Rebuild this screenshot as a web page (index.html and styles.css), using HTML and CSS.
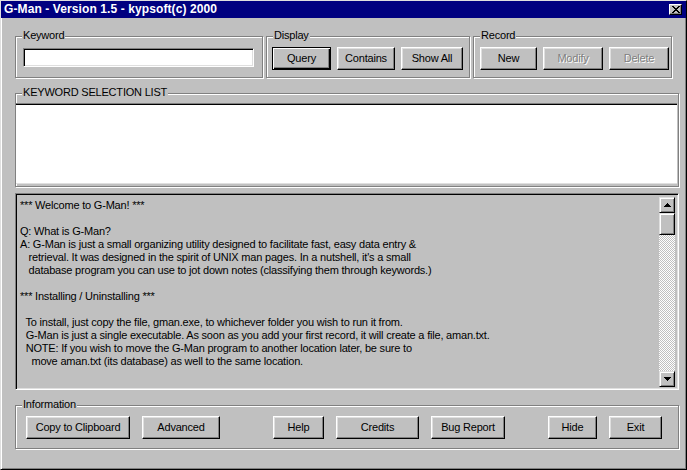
FILE: index.html
```html
<!DOCTYPE html>
<html>
<head>
<meta charset="utf-8">
<title>G-Man</title>
<link rel="stylesheet" href="styles.css">
</head>
<body>
<div class="window">
  <div class="titlebar">
    <span class="title">G-Man - Version 1.5 - kypsoft(c) 2000</span>
    <button class="close" aria-label="Close">
      <svg width="8" height="7" viewBox="0 0 8 7" shape-rendering="crispEdges">
        <path fill="#000" d="M0 0h2v1H0zM6 0h2v1H6zM1 1h2v1H1zM5 1h2v1H5zM2 2h4v1H2zM3 3h2v1H3zM2 4h4v1H2zM1 5h2v1H1zM5 5h2v1H5zM0 6h2v1H0zM6 6h2v1H6z"/>
      </svg>
    </button>
  </div>
  <div class="content">
    <div class="top-row">
      <div class="group g-keyword">
        <span class="legend">Keyword</span>
        <div class="field"></div>
      </div>
      <div class="group g-display">
        <span class="legend">Display</span>
        <button class="btn default w59">Query</button>
        <button class="btn w58">Contains</button>
        <button class="btn w62">Show All</button>
      </div>
      <div class="group g-record">
        <span class="legend">Record</span>
        <button class="btn w57">New</button>
        <button class="btn w60" disabled>Modify</button>
        <button class="btn w60" disabled>Delete</button>
      </div>
    </div>
    <div class="group g-list">
      <span class="legend">KEYWORD SELECTION LIST</span>
      <div class="listbox"></div>
    </div>
    <div class="memo">
      <div class="memo-text">*** Welcome to G-Man! ***

Q: What is G-Man?
A: G-Man is just a small organizing utility designed to facilitate fast, easy data entry &amp;
   retrieval. It was designed in the spirit of UNIX man pages. In a nutshell, it's a small
   database program you can use to jot down notes (classifying them through keywords.)

*** Installing / Uninstalling ***

  To install, just copy the file, gman.exe, to whichever folder you wish to run it from.
  G-Man is just a single executable. As soon as you add your first record, it will create a file, aman.txt.
  NOTE: If you wish to move the G-Man program to another location later, be sure to
    move aman.txt (its database) as well to the same location.</div>
      <div class="vscroll">
        <div class="sb-btn">
          <svg width="7" height="4" viewBox="0 0 7 4" shape-rendering="crispEdges"><path fill="#000" d="M3 0h1v1H3zM2 1h3v1H2zM1 2h5v1H1zM0 3h7v1H0z"/></svg>
        </div>
        <div class="sb-thumb"></div>
        <div class="sb-track"></div>
        <div class="sb-btn">
          <svg width="7" height="4" viewBox="0 0 7 4" shape-rendering="crispEdges"><path fill="#000" d="M0 0h7v1H0zM1 1h5v1H1zM2 2h3v1H2zM3 3h1v1H3z"/></svg>
        </div>
      </div>
    </div>
    <div class="group g-info">
      <span class="legend">Information</span>
      <button class="btn w104">Copy to Clipboard</button>
      <button class="btn w78">Advanced</button>
      <button class="btn w51 sep-help">Help</button>
      <button class="btn w83">Credits</button>
      <button class="btn w74">Bug Report</button>
      <button class="btn w49 sep-hide">Hide</button>
      <button class="btn w53">Exit</button>
    </div>
  </div>
</div>
</body>
</html>
```

FILE: styles.css
```css
* { box-sizing: border-box; }

html, body {
  margin: 0;
  padding: 0;
}

body {
  width: 687px;
  height: 470px;
  overflow: hidden;
  background: #c0c0c0;
  font-family: "Liberation Sans", Arial, sans-serif;
  font-size: 11px;
  letter-spacing: -0.2px;
  color: #000;
}

.window {
  width: 687px;
  height: 470px;
  display: flex;
  flex-direction: column;
  background: #c0c0c0;
  border: 1px solid;
  border-color: #dfdfdf #000 #000 #dfdfdf;
  box-shadow: inset 1px 1px #fff, inset -1px -1px #808080;
}

.titlebar {
  height: 17px;
  flex: none;
  display: flex;
  align-items: center;
  justify-content: space-between;
  padding: 0 4px 0 3px;
  background: #000080;
  color: #fff;
  font-weight: bold;
  font-size: 12px;
  letter-spacing: 0.1px;
}

.title {
  line-height: 17px;
  white-space: nowrap;
}

.close {
  width: 13px;
  height: 11px;
  padding: 0;
  display: flex;
  align-items: center;
  justify-content: center;
  background: #c0c0c0;
  border: 1px solid;
  border-color: #fff #000 #000 #fff;
  box-shadow: inset -1px -1px #808080;
}

.content {
  flex: 1;
  display: flex;
  flex-direction: column;
  padding: 18px 7px 0 14px;
}

.top-row {
  display: flex;
  gap: 3px;
  height: 42px;
  flex: none;
}

.group {
  position: relative;
  border: 1px solid #808080;
  box-shadow: inset 1px 1px #fff, 1px 1px #fff;
}

.legend {
  position: absolute;
  top: -8px;
  left: 6px;
  padding: 0 1px;
  line-height: 13px;
  background: #c0c0c0;
  white-space: nowrap;
}

.g-keyword {
  width: 248px;
  padding: 11px 8px 0 7px;
}

.field {
  height: 19px;
  background: #fff;
  border: 1px solid;
  border-color: #808080 #fff #fff #808080;
  box-shadow: inset 1px 1px #000, inset -1px -1px #dfdfdf;
}

.g-display {
  width: 204px;
  padding: 10px 0 0 5px;
  display: flex;
  gap: 6px;
  align-items: flex-start;
}

.g-record {
  width: 199px;
  padding: 10px 0 0 6px;
  display: flex;
  gap: 6px;
  align-items: flex-start;
}

.btn {
  height: 23px;
  flex: none;
  padding: 0 0 1px;
  display: flex;
  align-items: center;
  justify-content: center;
  background: #c0c0c0;
  color: #000;
  font: inherit;
  letter-spacing: inherit;
  line-height: 13px;
  white-space: nowrap;
  border: 1px solid;
  border-color: #fff #000 #000 #fff;
  box-shadow: inset -1px -1px #808080, inset 1px 1px #dfdfdf;
}

.btn.default {
  border-color: #000;
  box-shadow: inset 1px 1px #fff, inset -1px -1px #000, inset -2px -2px #808080;
}

.btn:disabled {
  color: #808080;
  text-shadow: 1px 1px #fff;
}

.w49 { width: 49px; }
.w51 { width: 51px; }
.w53 { width: 53px; }
.w57 { width: 57px; }
.w58 { width: 58px; }
.w59 { width: 59px; }
.w60 { width: 60px; }
.w62 { width: 62px; }
.w74 { width: 74px; }
.w78 { width: 78px; }
.w83 { width: 83px; }
.w104 { width: 104px; }

.sep-help { margin-left: 41px; }
.sep-hide { margin-left: 31px; }

.g-list {
  flex: none;
  height: 94px;
  margin-top: 15px;
  padding: 9px 0 2px 0;
}

.listbox {
  height: 81px;
  margin-right: 1px;
  background: #fff;
  border-top: 1px solid #808080;
  box-shadow: inset 0 1px #000;
  border-bottom: 1px solid #dfdfdf;
}

.memo {
  flex: none;
  height: 197px;
  margin-top: 6px;
  padding: 1px;
  display: flex;
  background: #c0c0c0;
  border: 1px solid;
  border-color: #808080 #fff #fff #808080;
  box-shadow: inset 1px 1px #000, inset -1px -1px #dfdfdf;
}

.memo-text {
  flex: 1;
  min-width: 0;
  padding: 4px 0 0 3px;
  white-space: pre;
  overflow: hidden;
  line-height: 13px;
}

.vscroll {
  width: 16px;
  flex: none;
  margin: 2px 2px 1px 0;
  display: flex;
  flex-direction: column;
}

.sb-btn,
.sb-thumb {
  flex: none;
  background: #c0c0c0;
  border: 1px solid;
  border-color: #dfdfdf #000 #000 #dfdfdf;
  box-shadow: inset 1px 1px #fff, inset -1px -1px #808080;
}

.sb-btn {
  height: 16px;
  display: flex;
  align-items: center;
  justify-content: center;
}

.sb-thumb {
  height: 22px;
}

.sb-track {
  flex: 1;
  background: repeating-conic-gradient(#fff 0 25%, #c0c0c0 0 50%) 0 0 / 2px 2px;
}

.g-info {
  flex: none;
  height: 44px;
  margin-top: 15px;
  padding: 10px 0 0 10px;
  display: flex;
  gap: 12px;
  align-items: flex-start;
}
```
